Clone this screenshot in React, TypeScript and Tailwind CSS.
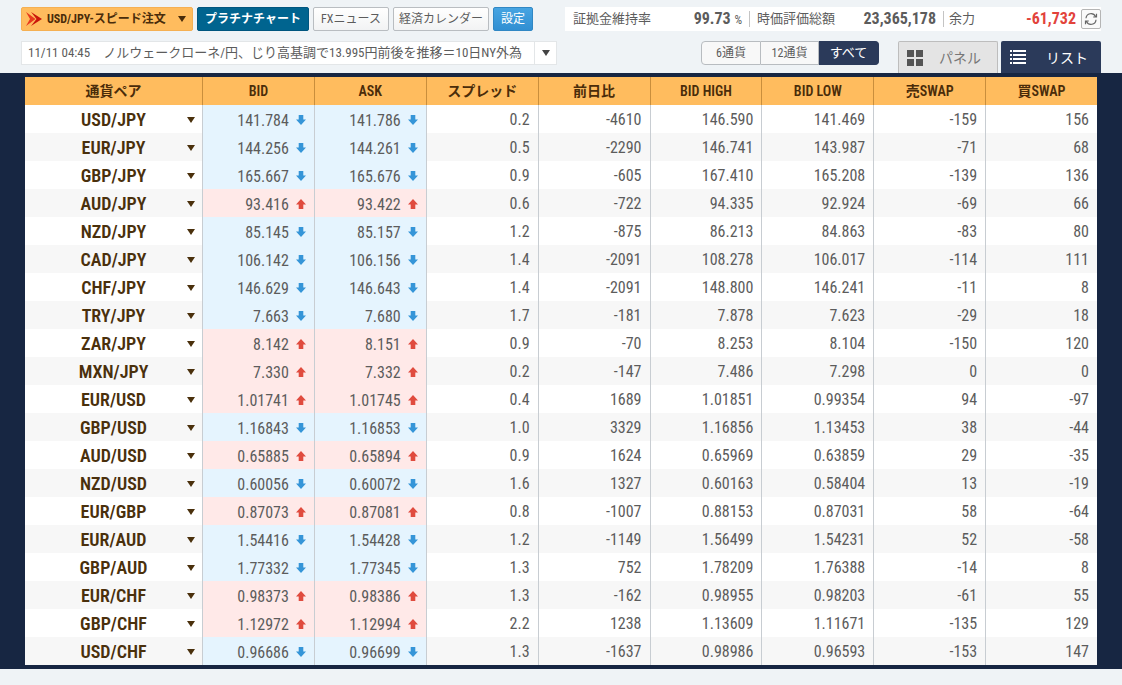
import { useState } from "react";
import clsx from "clsx";

type Dir = "up" | "down";
type Rate = [pair: string, bid: string, bidDir: Dir, ask: string, askDir: Dir, ...rest: string[]];

const RATES: Rate[] = [
  ["USD/JPY", "141.784", "down", "141.786", "down", "0.2", "-4610", "146.590", "141.469", "-159", "156"],
  ["EUR/JPY", "144.256", "down", "144.261", "down", "0.5", "-2290", "146.741", "143.987", "-71", "68"],
  ["GBP/JPY", "165.667", "down", "165.676", "down", "0.9", "-605", "167.410", "165.208", "-139", "136"],
  ["AUD/JPY", "93.416", "up", "93.422", "up", "0.6", "-722", "94.335", "92.924", "-69", "66"],
  ["NZD/JPY", "85.145", "down", "85.157", "down", "1.2", "-875", "86.213", "84.863", "-83", "80"],
  ["CAD/JPY", "106.142", "down", "106.156", "down", "1.4", "-2091", "108.278", "106.017", "-114", "111"],
  ["CHF/JPY", "146.629", "down", "146.643", "down", "1.4", "-2091", "148.800", "146.241", "-11", "8"],
  ["TRY/JPY", "7.663", "down", "7.680", "down", "1.7", "-181", "7.878", "7.623", "-29", "18"],
  ["ZAR/JPY", "8.142", "up", "8.151", "up", "0.9", "-70", "8.253", "8.104", "-150", "120"],
  ["MXN/JPY", "7.330", "up", "7.332", "up", "0.2", "-147", "7.486", "7.298", "0", "0"],
  ["EUR/USD", "1.01741", "up", "1.01745", "up", "0.4", "1689", "1.01851", "0.99354", "94", "-97"],
  ["GBP/USD", "1.16843", "down", "1.16853", "down", "1.0", "3329", "1.16856", "1.13453", "38", "-44"],
  ["AUD/USD", "0.65885", "up", "0.65894", "up", "0.9", "1624", "0.65969", "0.63859", "29", "-35"],
  ["NZD/USD", "0.60056", "down", "0.60072", "down", "1.6", "1327", "0.60163", "0.58404", "13", "-19"],
  ["EUR/GBP", "0.87073", "up", "0.87081", "up", "0.8", "-1007", "0.88153", "0.87031", "58", "-64"],
  ["EUR/AUD", "1.54416", "down", "1.54428", "down", "1.2", "-1149", "1.56499", "1.54231", "52", "-58"],
  ["GBP/AUD", "1.77332", "down", "1.77345", "down", "1.3", "752", "1.78209", "1.76388", "-14", "8"],
  ["EUR/CHF", "0.98373", "up", "0.98386", "up", "1.3", "-162", "0.98955", "0.98203", "-61", "55"],
  ["GBP/CHF", "1.12972", "up", "1.12994", "up", "2.2", "1238", "1.13609", "1.11671", "-135", "129"],
  ["USD/CHF", "0.96686", "down", "0.96699", "down", "1.3", "-1637", "0.98986", "0.96593", "-153", "147"],
];

const COLUMNS = ["通貨ペア", "BID", "ASK", "スプレッド", "前日比", "BID HIGH", "BID LOW", "売SWAP", "買SWAP"];

function Caret({ className }: { className?: string }) {
  return (
    <svg viewBox="0 0 8 6" className={clsx("h-[6px] w-2 fill-current", className)} aria-hidden="true">
      <path d="M0 0h8L4 6z" />
    </svg>
  );
}

function Arrow({ dir }: { dir: Dir }) {
  return (
    <svg
      viewBox="0 0 10 10"
      className={clsx("mb-0.5 h-[10px] w-[10px] shrink-0", dir === "up" ? "fill-[#e04b3e]" : "rotate-180 fill-[#3595d8]")}
      role="img"
      aria-label={dir}
    >
      <path d="M5 0l5 5.4H7.3V10H2.7V5.4H0z" />
    </svg>
  );
}

function PriceCell({ value, dir }: { value: string; dir: Dir }) {
  return (
    <td className={clsx("border-l border-[#c8cdd2] p-0 pr-2 pt-1", dir === "up" ? "bg-[#ffe9e8]" : "bg-[#e5f4fe]")}>
      <div className="flex items-center justify-end gap-[7px]">
        {value}
        <Arrow dir={dir} />
      </div>
    </td>
  );
}

function Toolbar() {
  return (
    <div className="flex h-6 items-stretch gap-1 text-[12px]">
      <div className="relative flex w-[172px]">
        <select
          aria-label="注文方法"
          className="w-full appearance-none rounded-xs border border-[#f5b053] bg-[#ffbc5e] pl-[25px] font-bold text-[#4a2c0a]"
        >
          <option>USD/JPY-スピード注文</option>
        </select>
        <svg viewBox="0 0 16 14" className="pointer-events-none absolute left-[5px] top-[5px] h-[14px] w-4" aria-hidden="true">
          <path d="M0 0l9.500 7L0 14l4-7z" fill="#e8391d" />
          <path d="M5 0l11 7L5 14l5.500-7z" fill="#c9160c" />
        </svg>
        <Caret className="pointer-events-none absolute right-[7px] top-[9px] text-[#4a2c0a]" />
      </div>
      <button className="w-28 rounded-xs border border-[#00567f] bg-[#00648f] font-bold text-white">プラチナチャート</button>
      <button className="w-19 rounded-xs border border-[#b9bdc1] bg-linear-to-b from-white to-[#f2f3f4]">FXニュース</button>
      <button className="w-24 rounded-xs border border-[#b9bdc1] bg-linear-to-b from-white to-[#f2f3f4]">経済カレンダー</button>
      <button className="w-10 rounded-xs border border-[#3087c4] bg-linear-to-b from-[#46a4e2] to-[#318fd2] text-white">設定</button>
    </div>
  );
}

function Balance() {
  return (
    <dl className="flex h-6 flex-1 items-center whitespace-nowrap bg-white pl-2 text-[13px]">
      <dt>証拠金維持率</dt>
      <dd className="ml-auto text-[16px] font-bold">
        99.73 <span className="text-[12px] font-normal">%</span>
      </dd>
      <dt className="ml-[7px] border-l border-[#c4c4c4] pl-[7px] leading-4">時価評価総額</dt>
      <dd className="w-[101px] text-right text-[16px] font-bold">23,365,178</dd>
      <dt className="ml-[7px] border-l border-[#c4c4c4] pl-[5px] leading-4">余力</dt>
      <dd className="w-[101px] text-right text-[16px] font-bold text-[#e2433b]">-61,732</dd>
      <dd className="ml-[5px]">
        <button aria-label="更新" className="flex h-5 w-5 items-center justify-center rounded-xs border border-[#b5b5b5] bg-[#fafafa]">
          <svg viewBox="0 0 14 14" className="h-[14px] w-[14px]" fill="none" stroke="#666" strokeWidth="1.2" aria-hidden="true">
            <path d="M2 6.300A5 5 0 0 1 11.500 4.500M12.500 1.800v3.200H9.200M12 7.700A5 5 0 0 1 2.500 9.500M1.500 12.200V9h3.300" />
          </svg>
        </button>
      </dd>
    </dl>
  );
}

function NewsBar() {
  return (
    <div className="flex h-6 w-[536px] items-stretch border border-[#e3e6e8] bg-white">
      <a href="#news" className="flex flex-1 items-center gap-[13px] overflow-hidden whitespace-nowrap pl-1.5 text-[13px]">
        <time>11/11 04:45</time>
        <span>ノルウェークローネ/円、じり高基調で13.995円前後を推移＝10日NY外為</span>
      </a>
      <button aria-label="ニュース一覧" className="flex w-[22px] items-center justify-center border-l border-[#e3e6e8] text-[#444]">
        <Caret />
      </button>
    </div>
  );
}

const FILTERS = ["6通貨", "12通貨", "すべて"];

export default function App() {
  const [filter, setFilter] = useState("すべて");

  return (
    <div className="min-h-screen bg-[#eff3f6] font-['Roboto_Condensed','Liberation_Sans_Narrow',Roboto,'Noto_Sans_CJK_JP',sans-serif] text-[#5c5c5c]">
      <header className="px-[21px] pt-[7px]">
        <div className="flex gap-8">
          <Toolbar />
          <Balance />
        </div>
        <div className="mt-[10px] flex items-start justify-between">
          <NewsBar />
          <div className="flex">
            <div className="mr-[19px] flex h-6 text-[12px]">
              {FILTERS.map((f) => (
                <button
                  key={f}
                  onClick={() => setFilter(f)}
                  className={clsx(
                    "border first:w-15 first:rounded-l-sm last:w-15 last:rounded-r-sm not-first:border-l-0",
                    f === filter ? "border-[#2b3a5a] bg-[#2b3a5a] text-[13px] text-white" : "w-[58px] border-[#b8bcc0] bg-[#f8f8f8]"
                  )}
                >
                  {f}
                </button>
              ))}
            </div>
            <div className="flex h-8 gap-[3px] text-[14px]">
              <button className="flex w-[100px] items-center gap-4 rounded-t-xs border border-b-0 border-[#bdbdbd] bg-[#e4e4e4] pl-2 text-[#777]">
                <svg viewBox="0 0 16 16" className="h-4 w-4 fill-[#555]" aria-hidden="true">
                  <path d="M0 0h7v7H0zM9 0h7v7H9zM0 9h7v7H0zM9 9h7v7H9z" />
                </svg>
                <span className="pt-0.5">パネル</span>
              </button>
              <button className="flex w-[100px] items-center gap-5 rounded-t-xs bg-[#2b3a5a] pl-[9px] text-white">
                <svg viewBox="0 0 16 14" className="h-[14px] w-4 fill-white" aria-hidden="true">
                  <path d="M0 0h2v2H0zM3 0h13v2H3zM0 4h2v2H0zM3 4h13v2H3zM0 8h2v2H0zM3 8h13v2H3zM0 12h2v2H0zM3 12h13v2H3z" />
                </svg>
                <span className="pt-0.5">リスト</span>
              </button>
            </div>
          </div>
        </div>
      </header>

      <main className="bg-[#172642] px-[25px] py-1">
        <table className="w-full table-fixed border-separate border-spacing-0 bg-white">
          <thead>
            <tr className="h-7 bg-[#ffbc5e] text-[14px] text-[#4a2c0a]">
              {COLUMNS.map((c) => (
                <th key={c} scope="col" className="border-[#c98e3c] p-0 font-semibold first:w-[177px] not-first:border-l">
                  {c}
                </th>
              ))}
            </tr>
          </thead>
          <tbody>
            {RATES.map(([pair, bid, bidDir, ask, askDir, ...rest]) => (
              <tr key={pair} className="h-7 text-right text-[16px] leading-5 even:bg-[#f7f7f7]">
                <th scope="row" className="p-0 pt-0.5 text-[18px] font-semibold text-[#4a300c]">
                  <div className="grid grid-cols-[20px_1fr_20px] items-center">
                    <span className="col-start-2 text-center">{pair}</span>
                    <button aria-label={`${pair} メニュー`} className="flex h-5 items-center pl-[5px]">
                      <Caret />
                    </button>
                  </div>
                </th>
                <PriceCell value={bid} dir={bidDir} />
                <PriceCell value={ask} dir={askDir} />
                {rest.map((v, i) => (
                  <td key={i} className="border-l border-[#c8cdd2] p-0 pr-2 pt-0.5">
                    {v}
                  </td>
                ))}
              </tr>
            ))}
          </tbody>
        </table>
      </main>
    </div>
  );
}
